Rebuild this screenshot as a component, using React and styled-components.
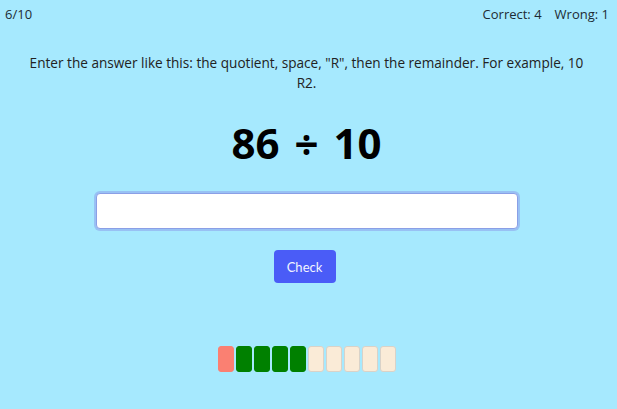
import React, { useState } from "react";
import styled, { createGlobalStyle } from "styled-components";

const GlobalStyle = createGlobalStyle`
  html, body {
    margin: 0;
    padding: 0;
    background: #a6e9fe;
  }
  body {
    font-family: "Open Sans", "Segoe UI", sans-serif;
    color: #1a1a1a;
  }
`;

const Page = styled.div`
  width: 617px;
  height: 409px;
  background: #a6e9fe;
  display: flex;
  flex-direction: column;
  box-sizing: border-box;
`;

const TopBar = styled.div`
  display: flex;
  justify-content: space-between;
  padding: 4px 8px 0 5px;
  font-size: 13px;
  line-height: 20px;
  color: #1d2b33;
`;

const Score = styled.div`
  display: flex;
  gap: 13px;
`;

const Main = styled.div`
  display: flex;
  flex-direction: column;
  align-items: center;
  padding: 29px 30px 0 26px;
`;

const Hint = styled.p`
  margin: 0;
  max-width: 556px;
  font-size: 13.6px;
  line-height: 20px;
  text-align: center;
  color: #222;
`;

const Problem = styled.div`
  margin-top: 22px;
  font-size: 42px;
  font-weight: 700;
  line-height: 56px;
  word-spacing: 4px;
  color: #000;
`;

const AnswerInput = styled.input`
  margin-top: 22px;
  width: 422px;
  height: 36px;
  box-sizing: border-box;
  border: 1px solid #8b9fe6;
  border-radius: 4px;
  outline: none;
  box-shadow: 0 0 0 2px rgba(140, 160, 235, 0.55);
  background: #fff;
  font-size: 16px;
  padding: 0 8px;
`;

const CheckButton = styled.button`
  margin: 21px 4px 0 0;
  width: 62px;
  height: 33px;
  border: none;
  border-radius: 4px;
  background: #4a5cf7;
  color: #f2f4ff;
  font-family: Lato, sans-serif;
  font-size: 13px;
  cursor: pointer;
`;

const Progress = styled.div`
  display: flex;
  gap: 2px;
  margin-top: 63px;
`;

const colors = {
  wrong: "#fa8072",
  right: "#008000",
  todo: "#faebd7",
};

const Cell = styled.div`
  width: 16px;
  height: 26px;
  box-sizing: border-box;
  border-radius: 3px;
  background: ${(p) => colors[p.$state]};
  border: 1px solid ${(p) => (p.$state === "todo" ? "#d9d2c8" : colors[p.$state])};
`;

const results = ["wrong", "right", "right", "right", "right", "todo", "todo", "todo", "todo", "todo"];

export default function App() {
  const [answer, setAnswer] = useState("");

  return (
    <Page>
      <GlobalStyle />
      <TopBar>
        <span>6/10</span>
        <Score>
          <span>Correct: 4</span>
          <span>Wrong: 1</span>
        </Score>
      </TopBar>
      <Main>
        <Hint>
          Enter the answer like this: the quotient, space, "R", then the remainder. For example, 10 R2.
        </Hint>
        <Problem>86 ÷ 10</Problem>
        <AnswerInput value={answer} onChange={(e) => setAnswer(e.target.value)} />
        <CheckButton>Check</CheckButton>
        <Progress>
          {results.map((r, i) => (
            <Cell key={i} $state={r} />
          ))}
        </Progress>
      </Main>
    </Page>
  );
}
